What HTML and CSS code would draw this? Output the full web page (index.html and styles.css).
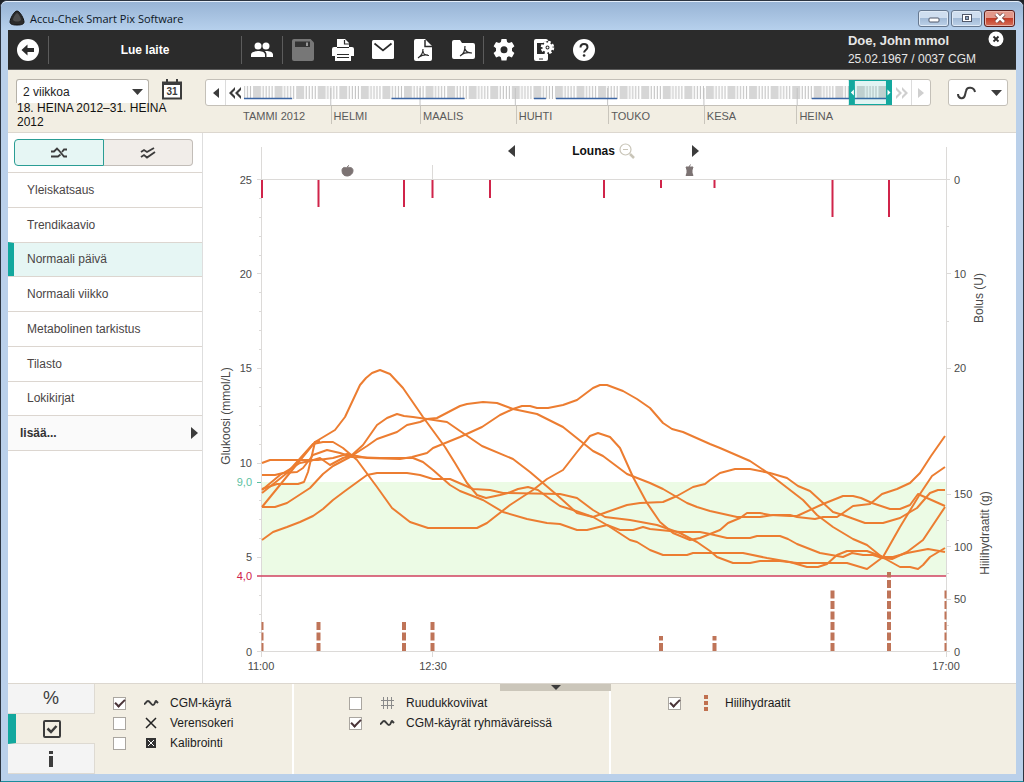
FILE: index.html
```html
<!DOCTYPE html>
<html lang="fi">
<head>
    <meta charset="UTF-8">
    <meta name="viewport" content="width=device-width, initial-scale=1.0">
    <title>Accu-Chek Smart Pix Software</title>
    <link rel="stylesheet" href="styles.css">
</head>
<body>
<div class="window">
    <header class="titlebar">
        <svg class="app-icon" width="16" height="16" viewBox="0 0 16 16"><path d="M8 1C5 1 1 9 1 12c0 2 2 3 7 3s7-1 7-3C15 9 11 1 8 1z" fill="#2b2b2b" stroke="#111"/><path d="M8 3C6 4 4 8 4 10c2 2 6 2 8 0 0-2-2-6-4-7z" fill="#4d4d4d"/></svg>
        <h1>Accu-Chek Smart Pix Software</h1>
        <div class="window-buttons">
            <button type="button" aria-label="Minimize"><svg width="12" height="10" viewBox="0 0 12 10"><rect x="1" y="5" width="10" height="4" rx="1" fill="#fff" stroke="#50586a"/></svg></button>
            <button type="button" aria-label="Maximize"><svg width="12" height="10" viewBox="0 0 12 10"><rect x="1.500" y="1.500" width="9" height="7" fill="#fff" stroke="#50586a"/><rect x="4.500" y="3.500" width="3" height="3" fill="#8fa5c0" stroke="#50586a"/></svg></button>
            <button type="button" class="close" aria-label="Close"><svg width="12" height="10" viewBox="0 0 12 10"><path d="M2 1l8 8M10 1L2 9" stroke="#6b3a36" stroke-width="4"/><path d="M2 1l8 8M10 1L2 9" stroke="#fff" stroke-width="2.500"/></svg></button>
        </div>
    </header>

    <div class="toolbar">
        <button type="button" class="tool" aria-label="Takaisin"><svg width="22" height="22" viewBox="0 0 22 22"><circle cx="11" cy="11" r="11" fill="#fff"/><path d="M4.500 11l6-5.500v3.500h6.500v4h-6.500v3.500z" fill="#2b2b2b"/></svg></button>
        <button type="button" class="read-device">Lue laite</button>
        <button type="button" class="tool" aria-label="Potilaat"><svg width="24" height="20" viewBox="0 0 24 20" fill="#fff"><circle cx="8" cy="6" r="3.500"/><circle cx="16" cy="6" r="3.500"/><path d="M1 17v-2.500C1 12 5 11 8 11s7 1 7 3.500V17z"/><path d="M16.500 17h6.500v-2.500C23 12 19.500 11 16 11c-.5 0-.8 0-1.200.1 1 .8 1.700 2 1.700 3.400z"/></svg></button>
        <div class="tools">
            <button type="button" class="tool" aria-label="Tallenna" disabled><svg width="22" height="22" viewBox="0 0 22 22"><path d="M2 0h16.500L22 3.500V20a2 2 0 0 1-2 2H2a2 2 0 0 1-2-2V2a2 2 0 0 1 2-2z" fill="#777"/><path d="M3 2.500h15v5.500H3z" fill="#333"/><path d="M14 3.500h2v3.500h-2z" fill="#999"/></svg></button>
            <button type="button" class="tool" aria-label="Tulosta"><svg width="22" height="22" viewBox="0 0 22 22"><path d="M5 0h8l4 4v4h3a2 2 0 0 1 2 2v7h-3v5H3v-5H0v-7a2 2 0 0 1 2-2h3z" fill="#fff"/><path d="M12.500 1v4H17M5 8.500h12M5 15.500h12M5 18.500h12" fill="none" stroke="#2b2b2b" stroke-width="1.200"/></svg></button>
            <button type="button" class="tool" aria-label="Sähköposti"><svg width="22" height="20" viewBox="0 0 22 20"><rect width="22" height="19" rx="1.500" fill="#fff"/><path d="M2.500 3.500l8.500 7 8.500-7" fill="none" stroke="#2b2b2b" stroke-width="1.700"/></svg></button>
            <button type="button" class="tool" aria-label="PDF"><svg width="18" height="22" viewBox="0 0 18 22"><path d="M2 0h9l7 7v13a2 2 0 0 1-2 2H2a2 2 0 0 1-2-2V2a2 2 0 0 1 2-2z" fill="#fff"/><path d="M11 1v6.500h7" fill="none" stroke="#2b2b2b" stroke-width="1.500"/><path d="M4 19c3-2 5-5 5-9M9 12c0 3 3 4.500 6 4.500M5 18c3-2 6-2.500 9-2" fill="none" stroke="#2b2b2b" stroke-width="1.200"/></svg></button>
            <button type="button" class="tool" aria-label="PDF-kansio"><svg width="23" height="20" viewBox="0 0 23 20"><path d="M2 0h6l2 3h11a2 2 0 0 1 2 2v12a2 2 0 0 1-2 2H2a2 2 0 0 1-2-2V2a2 2 0 0 1 2-2z" fill="#fff"/><path d="M8 16c4-2 5-5 5-10M13 9c1 3 3 4 7 4M9 15c3-2 6-3 10-2" fill="none" stroke="#2b2b2b" stroke-width="1.200"/></svg></button>
        </div>
        <div class="tools">
            <button type="button" class="tool" aria-label="Asetukset"><svg width="22" height="22" viewBox="0 0 22 22"><path fill="#fff" fill-rule="evenodd" d="M8.500 0h5l.6 3.100 1.800 1 3-1.100 2.500 4.300-2.400 2v2.800l2.400 2-2.500 4.300-3-1.100-1.800 1-.6 3.100h-5l-.6-3.100-1.800-1-3 1.100L.6 14.100l2.400-2V9.300l-2.400-2L3.100 3l3 1.100 1.800-1zM11 7.300a3.500 3.500 0 1 0 0 7 3.500 3.500 0 0 0 0-7z"/></svg></button>
            <button type="button" class="tool" aria-label="Laitteen asetukset"><svg width="22" height="22" viewBox="0 0 22 22"><rect x="1" width="14" height="22" rx="2" fill="#fff"/><path d="M4 4h8v11H4z" fill="#2b2b2b"/><path d="M6 20h4" stroke="#2b2b2b"/><circle cx="14.500" cy="8.500" r="6.500" fill="#2b2b2b"/><circle cx="14.500" cy="8.500" r="3.500" fill="none" stroke="#fff" stroke-width="3"/><circle cx="14.500" cy="8.500" r="5.500" fill="none" stroke="#fff" stroke-width="2.500" stroke-dasharray="2.500 1.820"/><circle cx="14.500" cy="8.500" r="1" fill="#fff"/></svg></button>
            <button type="button" class="tool" aria-label="Ohje"><svg width="22" height="22" viewBox="0 0 22 22"><circle cx="11" cy="11" r="11" fill="#fff"/><path d="M7.500 8.500C7.500 6 9 5 11 5s3.500 1.200 3.500 3.200c0 2.600-3.400 2.800-3.400 5.300" fill="none" stroke="#2b2b2b" stroke-width="2"/><circle cx="11.100" cy="16.500" r="1.300" fill="#2b2b2b"/></svg></button>
        </div>
        <div class="patient">
            <div class="patient-name">Doe, John mmol</div>
            <div>25.02.1967 / 0037 CGM</div>
        </div>
        <button type="button" class="patient-close" aria-label="Sulje"><svg width="16" height="16" viewBox="0 0 16 16"><circle cx="8" cy="8" r="7.500" fill="#fff"/><path d="M5.500 5.500l5 5M10.500 5.500l-5 5" stroke="#2b2b2b" stroke-width="1.800"/></svg></button>
    </div>

    <div class="period-bar">
        <div class="period">
            <div class="period-row">
                <div class="period-select">
                    <select aria-label="Ajanjakso">
                        <option>2 viikkoa</option>
                    </select>
                    <svg width="12" height="6" viewBox="0 0 12 6"><path d="M0 0h11L5.500 6z" fill="#3c3c3c"/></svg>
                </div>
                <button type="button" class="calendar" aria-label="Kalenteri"><svg width="20" height="21" viewBox="0 0 20 21"><path d="M1 3.500h18v16H1z" fill="#fff" stroke="#3c3c3c" stroke-width="2"/><path d="M0 3h20v3H0z" fill="#3c3c3c"/><path d="M5 0v4M15 0v4" stroke="#3c3c3c" stroke-width="2"/><text class="calendar-day" x="10" y="16">31</text></svg></button>
            </div>
            <div class="period-dates">18. HEINA 2012–31. HEINA 2012</div>
        </div>

        <div class="timeline">
            <div class="timeline-box">
                <button type="button" aria-label="Edellinen"><svg width="6" height="10" viewBox="0 0 6 10"><path d="M6 0v10L0 5z" fill="#3c3c3c"/></svg></button>
                <button type="button" aria-label="Edellinen jakso"><svg width="12" height="12" viewBox="0 0 12 12"><path d="M6 0v3L3 6l3 3v3L0 6zM12 0v3L9 6l3 3v3L6 6z" fill="#3c3c3c"/></svg></button>
                <svg class="strip" viewBox="245 80 646 26" preserveAspectRatio="none">
                    <defs>
                        <pattern id="week" x="254" y="80" width="21.500" height="26" patternUnits="userSpaceOnUse">
                            <path d="M0 6h8v13H0z" fill="#d6d6d6"/>
                            <path d="M10 6v13M13 6v13M16 6v13M19 6v13" stroke="#bdbdbd"/>
                        </pattern>
                    </defs>
                    <rect x="245" y="80" width="646" height="26" fill="url(#week)"/>
                    <path d="M331.500 88v18M420.500 88v18M515.500 88v18M607.500 88v18M703.500 88v18M796.500 88v18" stroke="#c4c4c4"/>
                    <path d="M245 98.500h48M392 98.500h73M534 98.500h12M556 98.500h61M811 98.500h77" stroke="#3c66a4" stroke-width="1.500"/>
                    <path d="M848 80h43v25h-43z" fill="#13a89e" fill-opacity=".12"/>
                    <path d="M848 80.500h43M848 104.500h43" stroke="#13a89e"/>
                    <path d="M848 80h6v25h-6zM885 80h6v25h-6z" fill="#13a89e"/>
                    <path d="M853 89.500v6l-3-3zM886.500 89.500v6l3-3z" fill="#fff"/>
                </svg>
                <button type="button" class="next" aria-label="Seuraava jakso" disabled><svg width="12" height="12" viewBox="0 0 12 12"><path d="M0 0l6 6-6 6V9l3-3-3-3zM6 0l6 6-6 6V9l3-3-3-3z" fill="#cfcfcf"/></svg></button>
                <button type="button" class="next" aria-label="Seuraava" disabled><svg width="6" height="10" viewBox="0 0 6 10"><path d="M0 0v10l6-5z" fill="#cfcfcf"/></svg></button>
            </div>
            <div class="months">
                <span>TAMMI 2012</span>
                <span>HELMI</span>
                <span>MAALIS</span>
                <span>HUHTI</span>
                <span>TOUKO</span>
                <span>KESA</span>
                <span>HEINA</span>
            </div>
        </div>

        <button type="button" class="view-menu" aria-label="Näkymä">
            <svg width="20" height="14" viewBox="0 0 20 14"><path d="M1 8c0 5 6 6 7 1l1-4c1-5 8-4 9 1" fill="none" stroke="#3c3c3c" stroke-width="2"/></svg>
            <svg width="12" height="6" viewBox="0 0 12 6"><path d="M0 0h11L5.500 6z" fill="#3c3c3c"/></svg>
        </button>
    </div>

    <main class="content">
        <aside class="sidebar">
            <div class="mode-switch">
                <button type="button" class="active" aria-label="Päällekkäin"><svg width="18" height="12" viewBox="0 0 18 12"><path d="M1 4.500h3l3-3 2 2 5 6h3M1 9.500h7l2.500-2M12 5l2-2.500h3" fill="none" stroke="#3c3c3c" stroke-width="1.800"/></svg></button>
                <button type="button" aria-label="Peräkkäin"><svg width="16" height="12" viewBox="0 0 16 12"><path d="M1 5l3-2 3 2 7-4M1 10l3-2 3 2.500L15 5" fill="none" stroke="#3c3c3c" stroke-width="1.800"/></svg></button>
            </div>
            <nav class="views">
                <a href="#">Yleiskatsaus</a>
                <a href="#">Trendikaavio</a>
                <a href="#" class="selected">Normaali päivä</a>
                <a href="#">Normaali viikko</a>
                <a href="#">Metabolinen tarkistus</a>
                <a href="#">Tilasto</a>
                <a href="#">Lokikirjat</a>
                <a href="#" class="more">lisää...<svg width="7" height="12" viewBox="0 0 7 12"><path d="M0 0v12l7-6z" fill="#3c3c3c"/></svg></a>
            </nav>
        </aside>

        <section class="chart-panel">
            <div class="meal-nav">
                <button type="button" aria-label="Edellinen ateria"><svg width="7" height="12" viewBox="0 0 7 12"><path d="M7 0v12L0 6z" fill="#3c3c3c"/></svg></button>
                <h2>Lounas <svg width="16" height="16" viewBox="0 0 16 16"><circle cx="6.500" cy="6.500" r="5.500" fill="none" stroke="#c9c5b8" stroke-width="1.200"/><path d="M4 6.500h5" stroke="#c9c5b8"/><path d="M11 11l4 4" stroke="#c9c5b8" stroke-width="2.500"/></svg></h2>
                <button type="button" aria-label="Seuraava ateria"><svg width="7" height="12" viewBox="0 0 7 12"><path d="M0 0v12l7-6z" fill="#3c3c3c"/></svg></button>
            </div>
            <svg class="chart" viewBox="203 133 813 550">
                <rect x="261" y="482" width="685" height="94" fill="#ecfbe5"/>
                <!-- axes and ticks -->
                <g class="axis">
                    <path d="M261.500 147v510M946.500 147v510M257 179.500h693M257 651.500h693M432.500 165v15M432.500 652v5"/>
                    <path d="M257 273.500h4M257 368.500h4M257 463.500h4M257 557.500h4M947 273.500h4M947 368.500h4M947 494.500h4M947 546.500h4M947 599.500h4"/>
                    <path d="M259 198.500h2M259 217.500h2M259 236.500h2M259 255.500h2M259 292.500h2M259 311.500h2M259 330.500h2M259 349.500h2M259 387.500h2M259 406.500h2M259 425.500h2M259 444.500h2M259 500.500h2M259 519.500h2M259 538.500h2M259 595.500h2M259 614.500h2M259 632.500h2M947 226.500h2M947 321.500h2M947 520.500h2M947 573.500h2M947 625.500h2"/>
                </g>
                <path d="M257 482.500h4" stroke="#5bbf9f"/>
                <path d="M257 576h689" stroke="#d0405f" stroke-width="1.500"/>
                <!-- bolus -->
                <path class="bolus" d="M262 180v18M318.500 180v27M404 180v27M432.500 180v18M490 180v18M604 180v18M661 180v8M714.500 180v8M832.500 180v37M889 180v37"/>
                <!-- carbs, drawn from the baseline up -->
                <path class="carbs" d="M318.500 651v-29M404 651v-29M432.500 651v-29M661 651v-15M714.500 651v-15M832.500 651v-61M889 651v-79"/>
                <path class="carbs thin" d="M262.500 651v-29M945.500 651v-61"/>
                <g class="curves">
                    <polyline points="262,507 315,442 335,430 345,417 360,385 366,378 372,373 380,370 390,374 403,388 423,417 445,447 455,463 467,483 477,495 486,498 500,495 508,493 518,489 528,487 538,490 550,499 560,506 573,510 593,517 607,525 630,540 637,542 650,550 663,555 687,555 693,553 743,553 767,558 790,562 807,567 818,567 827,564 837,555 847,551 867,551 883,557 893,557 907,553 928,549 945,552"/>
                    <polyline points="262,463 270,460 318,460 333,458 347,454 367,458 400,459 412,457 427,453 433,448 460,437 482,427 500,415 513,409 522,406 530,406 537,408 548,408 563,405 577,400 593,388 600,385 607,385 623,391 637,399 650,408 663,423 672,429 683,432 710,444 720,448 750,461 768,473 803,500 817,515 833,527 853,539 867,545 882,557 900,567 910,567 918,569 923,565 930,557 945,548"/>
                    <polyline points="262,475 275,475 283,473 297,472 303,468 313,455 327,450 340,453 352,457 380,458 413,458 423,462 433,470 450,485 460,491 483,500 503,512 527,519 547,523 560,524 577,530 587,530 607,525 620,530 633,530 643,527 650,529 660,530 680,532 700,532 710,534 727,538 750,538 757,536 780,536 788,539 797,544 820,553 843,557 852,553 863,555 873,555 882,558 892,559 907,552 923,540 945,507"/>
                    <polyline points="262,540 273,532 287,527 300,522 313,516 323,509 333,500 345,491 367,475 377,473 407,473 420,475 433,479 450,479 473,489 490,490 503,493 560,494 577,498 593,510 605,517 630,520 657,525 680,533 697,542 710,551 717,557 733,563 750,563 760,561 780,561 797,563 847,563 867,569 883,557 900,527 920,494 932,476 945,467"/>
                    <polyline points="262,507 275,507 287,503 310,488 323,474 333,466 350,457 367,446 377,439 397,432 407,425 420,422 427,419 437,418 460,406 467,404 483,402 497,403 513,409 537,414 563,427 583,443 593,451 603,456 627,474 650,483 663,489 687,503 697,507 710,511 737,517 760,517 773,515 790,515 797,517 815,519 823,517 837,517 843,513 853,506 870,504 882,494 897,489 910,483 920,473 931,456 945,436"/>
                    <polyline points="262,493 287,473 313,444 323,442 333,442 343,448 357,460 377,487 392,508 410,522 428,528 477,528 487,523 510,505 533,490 547,479 563,470 577,452 590,436 598,433 610,437 620,448 633,477 647,503 660,522 673,533 690,540 700,538 720,530 728,523 740,518 747,513 760,513 770,515 790,516 797,516 823,504 843,496 853,496 861,498 872,503 890,509 900,509 910,505 918,494 945,506"/>
                    <polyline points="262,490 280,475 300,463 310,461 320,458 330,465 343,458 352,455 363,445 377,425 387,418 397,414 404,416 413,417 427,419 447,422 460,431 482,446 513,459 530,472 557,495 577,513 593,517 607,512 627,505 640,503 663,502 677,496 693,487 705,484 710,480 720,473 735,469 750,469 770,473 787,478 798,486 810,491 833,512 843,515 865,523 883,523 900,518 917,508 930,493 938,490 945,490"/>
                    <polyline points="262,489 277,484 298,484 304,482 308,472 315,442 320,441"/>
                </g>
                <!-- meal markers -->
                <path d="M347 168c-2-1-5-1-5 2.500s2 5.500 5 5.500 6-2 6-5.500-4-3.500-6-2.500zM347 168c0-1 .5-2 2-2.500" fill="#7c7373" stroke="#7c7373"/>
                <path d="M686 167h7l-1 3v3l1 2.500h-7l1-2.500v-3zM689 167l1.500-2.500" fill="#7c7373" stroke="#7c7373"/>
                <g class="scale left">
                    <text x="252" y="184">25</text>
                    <text x="252" y="278">20</text>
                    <text x="252" y="372">15</text>
                    <text x="252" y="467">10</text>
                    <text x="252" y="486" class="high">9,0</text>
                    <text x="252" y="561">5</text>
                    <text x="252" y="580" class="low">4,0</text>
                    <text x="252" y="656">0</text>
                </g>
                <g class="scale">
                    <text x="954" y="184">0</text>
                    <text x="954" y="278">10</text>
                    <text x="954" y="372">20</text>
                    <text x="954" y="498">150</text>
                    <text x="954" y="551">100</text>
                    <text x="954" y="603">50</text>
                    <text x="954" y="656">0</text>
                </g>
                <g class="scale time">
                    <text x="261" y="670">11:00</text>
                    <text x="433" y="670">12:30</text>
                    <text x="946" y="670">17:00</text>
                </g>
                <g class="axis-title">
                    <text transform="translate(230 416) rotate(-90)">Glukoosi (mmol/L)</text>
                    <text transform="translate(983 298) rotate(-90)">Bolus (U)</text>
                    <text transform="translate(989 533) rotate(-90)">Hiilihydraatit (g)</text>
                </g>
            </svg>
        </section>
    </main>

    <footer class="options">
        <div class="tabs">
            <button type="button" class="percent">%</button>
            <button type="button" class="active" aria-label="Asetukset"><svg width="18" height="18" viewBox="0 0 18 18"><rect x="1" y="1" width="16" height="16" rx="1" fill="none" stroke="#3c3c3c" stroke-width="2"/><path d="M4.500 8.500l3.500 3.500 5.500-6" fill="none" stroke="#3c3c3c" stroke-width="2.500"/></svg></button>
            <button type="button" aria-label="Tiedot"><svg width="6" height="16" viewBox="0 0 6 16"><path d="M1 0h4v3H1zM1 5h4v11H1z" fill="#3c3c3c"/></svg></button>
        </div>
        <div class="group first">
            <label><input type="checkbox" checked><svg width="16" height="12" viewBox="0 0 16 12"><path d="M1 7c2 0 2-3 4-3s3 4 5 4 2-4 3-4l2 2" fill="none" stroke="#3c3c3c" stroke-width="2"/></svg>CGM-käyrä</label>
            <label><input type="checkbox"><svg width="16" height="12" viewBox="0 0 16 12"><path d="M3 1l10 10M13 1L3 11" stroke="#222" stroke-width="1.500"/></svg>Verensokeri</label>
            <label><input type="checkbox"><svg width="16" height="12" viewBox="0 0 16 12"><path d="M3 1h10v10H3z" fill="#333"/><path d="M5 3l6 6M11 3L5 9" stroke="#fff"/></svg>Kalibrointi</label>
        </div>
        <div class="group second">
            <label><input type="checkbox"><svg width="16" height="12" viewBox="0 0 16 12"><path d="M4.500 0v12M8.500 0v12M12.500 0v12M2 3.500h13M2 8.500h13" stroke="#8a8a8a"/></svg>Ruudukkoviivat</label>
            <label><input type="checkbox" checked><svg width="16" height="12" viewBox="0 0 16 12"><path d="M1 7c2 0 2-3 4-3s3 4 5 4 2-4 3-4l2 2" fill="none" stroke="#3c3c3c" stroke-width="2"/></svg>CGM-käyrät ryhmäväreissä</label>
        </div>
        <div class="group third">
            <label><input type="checkbox" checked><svg width="16" height="16" viewBox="0 0 16 16"><path d="M6 0h4v4H6zM6 6h4v4H6zM6 12h4v4H6z" fill="#c0704f"/></svg>Hiilihydraatit</label>
        </div>
        <button type="button" class="collapse" aria-label="Piilota"><svg width="10" height="5" viewBox="0 0 10 5"><path d="M0 0h10L5 5z" fill="#3c3c3c"/></svg></button>
    </footer>
</div>
</body>
</html>
```

FILE: styles.css
```css
* {
    box-sizing: border-box;
}
body {
    margin: 0;
    background: #1c2026;
    color: #3c3c3c;
    font-family: "Liberation Sans", Arial, sans-serif;
    font-size: 12px;
}
button {
    display: flex;
    align-items: center;
    justify-content: center;
    margin: 0;
    padding: 0;
    border: 0;
    background: none;
    color: inherit;
    font: inherit;
}
svg {
    flex: none;
}
.window {
    display: flex;
    flex-direction: column;
    min-height: 100vh;
    padding: 0 7px 7px;
    border: 1px solid #2c3440;
    border-bottom-color: #1b8c9c;
    border-radius: 7px 7px 0 0;
    background: #bad0ea;
}

/* title bar */
.titlebar {
    display: flex;
    align-items: center;
    height: 29px;
    margin: 0 -7px;
    padding: 4px 8px 0;
    border-top: 1px solid #e4eefa;
    border-radius: 6px 6px 0 0;
    background: linear-gradient(#98b4d5, #b6d0ec);
}
.titlebar h1 {
    flex: 1;
    margin: 0 0 0 5px;
    color: #0c1624;
    font-family: "Open Sans", "Noto Sans", sans-serif;
    font-size: 11px;
    font-weight: normal;
}
.window-buttons {
    display: flex;
    gap: 2px;
}
.window-buttons button {
    width: 31px;
    height: 17px;
    border: 1px solid #66788f;
    border-radius: 3px;
    background: linear-gradient(#cfdeef 45%, #a3bbd7 50%, #bcd1e8);
    box-shadow: inset 0 0 0 1px #dfeaf6;
}
.window-buttons .close {
    border-color: #5c1f1c;
    background: linear-gradient(#e2988a 45%, #c43d28 50%, #d4705a);
    box-shadow: inset 0 0 0 1px #e9b3a8;
}

/* toolbar */
.toolbar {
    display: flex;
    align-items: center;
    height: 40px;
    border-bottom: 1px solid #5a5a5a;
    background: #2b2b2b;
    color: #fff;
}
.tool {
    width: 40px;
    height: 28px;
}
.read-device {
    width: 194px;
    height: 28px;
    border: solid #5c5c5c;
    border-width: 0 1px;
    font-weight: bold;
}
.tools {
    display: flex;
    border-left: 1px solid #5c5c5c;
}
.patient {
    margin-left: auto;
    color: #e6e6e6;
    line-height: 18px;
}
.patient-name {
    font-size: 13px;
    font-weight: bold;
}
.patient-close {
    align-self: flex-start;
    margin: 1px 12px 0 12px;
}

/* period bar */
.period-bar {
    display: flex;
    align-items: flex-start;
    height: 63px;
    padding: 9px 8px 0;
    border-bottom: 1px solid #dcd7cf;
    background: #f2eee3;
}
.period {
    width: 189px;
}
.period-row {
    display: flex;
    gap: 13px;
}
.period-select {
    display: flex;
    align-items: center;
    width: 133px;
    height: 24px;
    padding-right: 4px;
    border: 1px solid #b5b1a8;
    border-bottom: 0;
    border-radius: 3px 3px 0 0;
    background: #fff;
}
.period-select select {
    flex: 1;
    margin: 0;
    padding: 0 6px;
    border: 0;
    appearance: none;
    background: none;
    color: #222;
    font: inherit;
}
.calendar {
    height: 20px;
}
.calendar-day {
    fill: #3c3c3c;
    font-size: 10px;
    font-weight: bold;
    text-anchor: middle;
}
.period-dates {
    display: flex;
    align-items: center;
    width: 160px;
    height: 24px;
    overflow: hidden;
    padding-left: 1px;
    background: #f2eee3;
    color: #111;
    line-height: 14px;
}
.timeline {
    flex: 1;
}
.timeline-box {
    display: flex;
    height: 27px;
    border: 1px solid #c4c0b8;
    border-radius: 3px;
    background: #fff;
}
.timeline-box button {
    width: 19px;
}
.timeline-box button + button {
    border-left: 1px solid #dcdcdc;
}
.strip {
    flex: 1;
    min-width: 0;
    height: 26px;
}
/* one column per month, as wide as its number of days */
.months {
    display: grid;
    grid-template-columns: 31fr 29fr 31fr 30fr 31fr 30fr 31fr;
    height: 16px;
    margin: 0 39px 0 30px;
    color: #5a5a5a;
    font-size: 11px;
    line-height: 15px;
}
.months span {
    padding: 3px 0 0 2px;
    border-left: 1px solid #c9c5bc;
    white-space: nowrap;
}
.months span:first-child {
    padding-left: 8px;
    border-left: 0;
}
.view-menu {
    gap: 14px;
    width: 60px;
    height: 27px;
    margin-left: 17px;
    padding-left: 4px;
    border: 1px solid #c4c0b8;
    border-radius: 3px;
    background: #fff;
}

/* content */
.content {
    display: flex;
    flex: 1;
    background: #fff;
}
.sidebar {
    width: 195px;
    border-right: 1px solid #dedede;
}
.mode-switch {
    display: flex;
    padding: 6px 9px 6px 6px;
}
.mode-switch button {
    flex: 1;
    height: 27px;
    border: 1px solid #c2bdb8;
    border-left: 0;
    border-radius: 0 4px 4px 0;
    background: #f1ede9;
}
.mode-switch .active {
    border: 1px solid #2a9d94;
    border-radius: 4px 0 0 4px;
    background: #e6f6f4;
}
.views {
    display: grid;
    grid-auto-rows: 1fr;
    height: 279px;
    border-bottom: 1px solid #dcd6d0;
}
.views a {
    display: flex;
    align-items: center;
    justify-content: space-between;
    padding: 0 4px 0 19px;
    border-top: 1px solid #dcd6d0;
    color: #4a4545;
    text-decoration: none;
}
.views .selected {
    padding-left: 13px;
    border-left: 6px solid #13a89e;
    background: #e6f6f4;
}
.views .more {
    padding-left: 12px;
    background: #fafafa;
    color: #333;
    font-weight: bold;
}
.chart-panel {
    position: relative;
    flex: 1;
}
/* centred on the plot, which sits left of the panel's middle */
.meal-nav {
    position: absolute;
    top: 10px;
    left: 0;
    right: 12px;
    display: flex;
    align-items: center;
    justify-content: space-between;
    width: 192px;
    margin: 0 auto;
}
.meal-nav h2 {
    display: flex;
    align-items: center;
    gap: 4px;
    margin: 0;
    color: #111;
    font-size: 12px;
}

/* chart */
.chart {
    display: block;
    width: 100%;
}
.axis path {
    fill: none;
    stroke: #dcdad8;
}
.bolus {
    fill: none;
    stroke: #d0244a;
    stroke-width: 2;
}
.carbs {
    fill: none;
    stroke: #bf7458;
    stroke-width: 4;
    stroke-dasharray: 8 2.5;
}
.carbs.thin {
    stroke-width: 2;
}
.curves polyline {
    fill: none;
    stroke: #ec7d31;
    stroke-width: 2;
    stroke-linejoin: round;
}
.scale text {
    fill: #4a4a4a;
    font-size: 11px;
}
.scale.left text {
    text-anchor: end;
}
.scale.time text,
.axis-title text {
    text-anchor: middle;
}
.scale .high {
    fill: #5bbf9f;
}
.scale .low {
    fill: #d0214a;
}
.axis-title text {
    fill: #4a4a4a;
    font-size: 12px;
}

/* options */
.options {
    position: relative;
    display: flex;
    height: 91px;
    border-top: 1px solid #dcd7cf;
    background: #f2eee3;
}
.tabs {
    display: flex;
    flex-direction: column;
    width: 87px;
}
.tabs button {
    flex: 1;
    border: solid #dedad2;
    border-width: 0 1px 1px 0;
    background: #f4f4f4;
}
.tabs .active {
    padding-right: 8px;
    border-left: 8px solid #13a89e;
    border-right: 0;
    background: none;
}
.tabs .percent {
    font-size: 18px;
}
.group {
    display: flex;
    flex-direction: column;
    padding-top: 9px;
}
.group label {
    display: flex;
    align-items: center;
    height: 20px;
    color: #1c1c1c;
}
.group svg {
    margin: 0 11px 0 17px;
}
.group.first {
    width: 199px;
    padding-left: 18px;
    border-right: 2px solid #fff;
}
.group.second {
    width: 317px;
    padding-left: 55px;
    border-right: 2px solid #fff;
}
.group.third {
    flex: 1;
    padding-left: 57px;
}
input[type="checkbox"] {
    display: grid;
    place-items: center;
    width: 13px;
    height: 13px;
    margin: 0;
    border: 1px solid #aaa6a0;
    appearance: none;
    background: #fff;
}
input[type="checkbox"]:checked::before {
    content: "";
    width: 8px;
    height: 4px;
    margin-bottom: 3px;
    border: solid #4a3438;
    border-width: 0 0 2px 2px;
    transform: rotate(-45deg);
}
.collapse {
    position: absolute;
    top: 0;
    left: 492px;
    width: 111px;
    height: 7px;
    background: #cbc6ba;
}
```
